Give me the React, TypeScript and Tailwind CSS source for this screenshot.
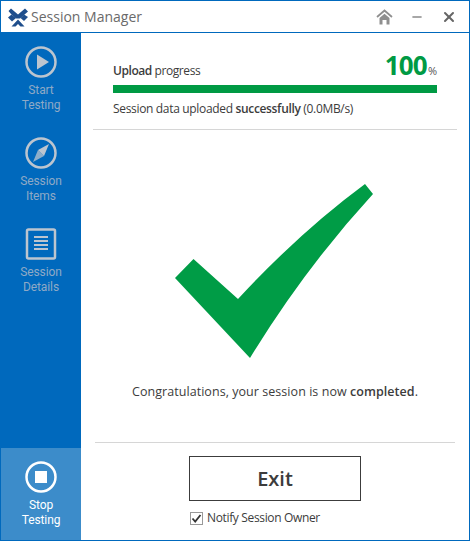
import { Minus, X } from "lucide-react";

const font = { fontFamily: '"Open Sans", "Noto Sans", sans-serif' };

function NavItem({ icon, lines, active }: { icon: React.ReactNode; lines: [string, string]; active?: boolean }) {
  return (
    <div className={`flex flex-col items-center ${active ? "text-white" : "text-[#8fa9c6]"}`}>
      {icon}
      <div className="mt-[5px] text-center font-['Roboto',sans-serif] text-[12px] leading-[15px] tracking-[-0.1px]">
        {lines[0]}
        <br />
        {lines[1]}
      </div>
    </div>
  );
}

function Logo() {
  return (
    <svg width="20" height="19" viewBox="0 0 20 19" fill="#1f4e8c">
      <path d="M3 0.5L10 6.5L17 0.5L20 3.5L12 10.5H8L3 6L0.5 3z" fill="#1f4e8c" />
      <path d="M0 9.5L3.5 6.5L8 10L4 13.5z" />
      <path d="M20 9L16 6.5L12.5 10L16 13z" />
      <path d="M3.5 18.5L10 11.5L16.5 18.5H12.5L10 16L7.5 18.5z" />
    </svg>
  );
}

function HomeIcon() {
  return (
    <svg width="17" height="16" viewBox="0 0 17 16" className="text-[#8f8f8f]">
      <path d="M1 8L8.5 1.5L16 8" fill="none" stroke="currentColor" strokeWidth="1.8" />
      <path d="M3.5 9L8.5 4.8L13.5 9V15.5H10.5V11H6.5V15.5H3.5Z" fill="currentColor" />
    </svg>
  );
}

export default function App() {
  return (
    <div style={font} className="flex h-[541px] w-[470px] flex-col border border-[#0069bd] bg-white text-[#3c3c3c]">
      <div className="flex h-[31px] shrink-0 items-center">
        <div className="ml-[7px] mt-[1px]">
          <Logo />
        </div>
        <span className="ml-[3px] text-[14px] text-[#6a6a6a]">Session Manager</span>
        <div className="ml-auto flex items-center text-[#8a8a8a]">
          <HomeIcon />
          <Minus size={14} strokeWidth={2.5} className="ml-[17px]" />
          <X size={16} strokeWidth={3} className="ml-[17px] mr-[12px] text-[#666]" />
        </div>
      </div>
      <div className="flex min-h-0 flex-1 border-t border-[#0069bd]">
        <div className="flex w-[80px] shrink-0 flex-col bg-[#0069bd] pt-[13px]">
          <NavItem
            lines={["Start", "Testing"]}
            icon={
              <svg width="32" height="32" viewBox="0 0 32 32" fill="none" stroke="currentColor" className="text-[#bcc5cf]">
                <circle cx="16" cy="16" r="14.5" strokeWidth="2.5" />
                <path d="M12 8.5L24 16L12 23.5Z" fill="currentColor" stroke="none" />
              </svg>
            }
          />
          <div className="h-[24px] shrink-0" />
          <NavItem
            lines={["Session", "Items"]}
            icon={
              <svg width="32" height="32" viewBox="0 0 32 32" fill="none" stroke="currentColor" className="text-[#bcc5cf]">
                <circle cx="16" cy="16" r="14.5" strokeWidth="2.5" />
                <path d="M24 7L19 19L13 13Z" fill="currentColor" stroke="none" />
                <path d="M8 25L13 13L19 19Z" fill="currentColor" stroke="none" opacity="0.75" />
              </svg>
            }
          />
          <div className="h-[24px] shrink-0" />
          <NavItem
            lines={["Session", "Details"]}
            icon={
              <svg width="32" height="32" viewBox="0 0 32 32" fill="none" stroke="currentColor" className="text-[#bcc5cf]">
                <rect x="2" y="1.5" width="28" height="29" rx="1.5" strokeWidth="2.5" />
                <path d="M9 9h14M9 13h14M9 17h14M9 21h14" strokeWidth="2" />
              </svg>
            }
          />
          <div className="mt-auto flex h-[92px] shrink-0 flex-col items-center justify-center bg-[#3c8cca]">
            <NavItem
              active
              lines={["Stop", "Testing"]}
              icon={
                <svg width="32" height="32" viewBox="0 0 32 32" fill="none" stroke="currentColor">
                  <circle cx="16" cy="16" r="14.5" strokeWidth="2.5" />
                  <rect x="10" y="10" width="12" height="12" fill="currentColor" stroke="none" />
                </svg>
              }
            />
          </div>
        </div>
        <div className="flex min-w-0 flex-1 flex-col">
          <div className="mx-[12px] h-[97px] shrink-0 border-b border-[#d6d6d6] px-[20px] pt-[17px]">
            <div className="flex h-[30px] items-baseline justify-between">
              <span className="text-[12px] leading-[18px] tracking-[-0.43px]">
                <b className="font-semibold">Upload</b> progress
              </span>
              <span className="flex items-baseline text-[#009a44]">
                <span className="text-[26px] font-bold leading-[30px] tracking-[-0.8px]">100</span>
                <span className="ml-[1px] text-[11px] text-[#555]">%</span>
              </span>
            </div>
            <div className="mt-[5px] h-[8px] bg-[#009a44]" />
            <div className="mt-[7px] text-[12px] leading-[18px] tracking-[-0.33px]">
              Session data uploaded <b className="font-semibold">successfully</b> (0.0MB/s)
            </div>
          </div>
          <div className="flex flex-1 flex-col items-center pt-[54px]">
            <svg width="198" height="174" viewBox="175 184 198 174" fill="#009c46" className="mr-[2px]">
              <path d="M175 278L193.5 259L238 299Q300 232 365 184L373 194Q305 268 250 358Z" />
            </svg>
            <div className="mt-[25px] whitespace-nowrap text-[12.5px] leading-[18px] tracking-[0.05px]">
              Congratulations, your session is now <b className="font-semibold">completed</b>.
            </div>
          </div>
          <div className="mx-[14px] flex h-[98px] shrink-0 flex-col items-center border-t border-[#d6d6d6] pt-[13px]">
            <div className="flex h-[45px] w-[172px] items-center justify-center border border-[#3c3c3c] text-[20px] font-semibold">
              Exit
            </div>
            <label className="mt-[9px] flex w-[172px] items-center pl-[1px] text-[12px] leading-[16px] tracking-[-0.35px]">
              <span className="flex h-[13px] w-[13px] items-center justify-center border border-[#999] text-[#333]">
                <svg width="11" height="11" viewBox="0 0 11 11" fill="none" stroke="currentColor" strokeWidth="1.8">
                  <path d="M1.5 5.5L4.2 8.5L9.5 2" />
                </svg>
              </span>
              <span className="ml-[4px]">Notify Session Owner</span>
            </label>
          </div>
        </div>
      </div>
    </div>
  );
}
